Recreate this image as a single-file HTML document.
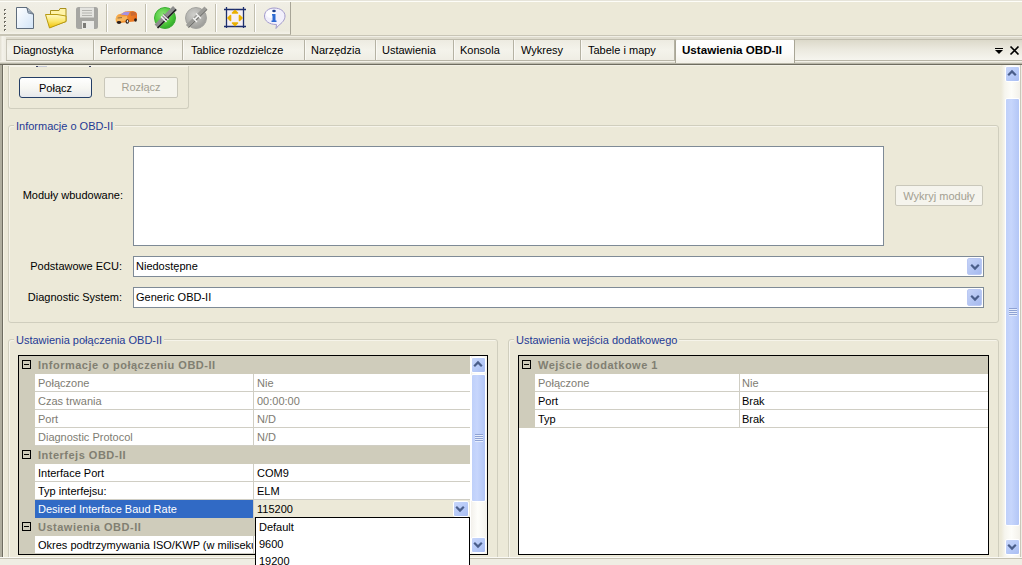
<!DOCTYPE html>
<html><head><meta charset="utf-8">
<style>
*{margin:0;padding:0;box-sizing:border-box}
html,body{width:1022px;height:565px;overflow:hidden;background:#ECE9D8;font-family:"Liberation Sans",sans-serif;font-size:11px;color:#000;position:relative}
.a{position:absolute}
.t{position:absolute;white-space:nowrap;line-height:13px}
/* toolbar */
#tb{left:0;top:0;width:1022px;height:35px;background:#EBE9DA;border-top:2px solid #fff}
#tbar{left:0;top:1px;width:291px;height:34px;background:linear-gradient(#F6F5EE,#EDEBE0 70%,#E2DFD0);border-right:1px solid #9D9C93;border-bottom:1px solid #C5C2B2}
.sep{position:absolute;top:4px;width:2px;height:28px;background:linear-gradient(90deg,#C2BFAF 0 1px,#FFFFFF 1px)}
/* tabs */
#tabs{left:0;top:35px;width:1022px;height:30px;background:#ECE9D8}
.tab{position:absolute;top:40px;height:20px;border-left:1px solid #FAF9F4;border-right:1px solid #B5B2A3}
.tab span{position:absolute;top:4px;white-space:nowrap;line-height:13px}
/* group boxes */
.gb{position:absolute;border:1px solid #D0CEBE;border-radius:3px;box-shadow:inset 1px 1px 0 #F6F4EA}
.gt{position:absolute;color:#1F3A94;background:#ECE9D8;padding:0 2px;white-space:nowrap;line-height:13px}
.btn{position:absolute;border:1px solid #243E66;border-radius:3px;background:linear-gradient(#FFFFFF,#F6F6F2 55%,#E6E8EC);text-align:center;line-height:19px;padding-top:1px}
.btnd{position:absolute;border:1px solid #C9C7BA;border-radius:2px;background:#F5F4ED;color:#A3A092;text-align:center;line-height:19px}
.tx{position:absolute;background:#fff;border:1px solid #7E8A96}
.combo{position:absolute;background:#fff;border:1px solid #7E8A96}
.combo span{position:absolute;left:2px;top:3px;white-space:nowrap}
.cbtn{position:absolute;right:1px;top:1px;width:15px;height:17px;border-radius:2px;background:linear-gradient(135deg,#C6D3F7,#B2C4F2 60%,#A6B9EE);border:1px solid #BAC8F3}
.lbl{position:absolute;white-space:nowrap;text-align:right}
/* property grid */
.pg{position:absolute;border:1px solid #000;background:#fff;overflow:hidden}
.row{position:absolute;left:0;height:18px}
.cat{background:#CFCCBB}
.cat b{position:absolute;left:19px;top:3px;color:#817F72;font-size:11px;letter-spacing:.5px;white-space:nowrap;line-height:13px}
.box{position:absolute;left:3px;top:4px;width:9px;height:9px;border:1px solid #000}
.box:after{content:"";position:absolute;left:1px;top:3px;width:5px;height:1px;background:#000}
.gut{position:absolute;left:0;top:0;width:16px;height:18px;background:#CFCCBB}
.c1{position:absolute;left:16px;top:0;height:18px;border-bottom:1px solid #D0CEC4;background:#fff}
.c1 span{position:absolute;left:3px;top:3px;white-space:nowrap;line-height:13px}
.c2 span{position:absolute;left:2px;top:3px;white-space:nowrap;line-height:13px}
.c2{position:absolute;top:0;height:18px;border-bottom:1px solid #D0CEC4;border-left:1px solid #D0CEC4;background:#fff}
.g{color:#7E7C72}
</style></head><body>

<!-- toolbar strip -->
<div class="a" style="left:0;top:0;width:1022px;height:36px;background:#ECE9D8;border-top:1px solid #E6E4DA"></div>
<div class="a" style="left:0;top:1px;width:1022px;height:1px;background:#FDFDF8"></div>
<div class="a" style="left:0;top:35px;width:1022px;height:1px;background:#C8C5B6"></div>
<div class="a" id="tbar" style="left:0;top:2px;width:291px;height:33px;background:linear-gradient(#F0EEE5,#EEECE0 50%,#ECEADD 90%,#F4F2EA);border-right:1px solid #A8A597;border-bottom:1px solid #C8C5B5"></div>
<div class="sep" style="left:106px"></div>
<div class="sep" style="left:145px"></div>
<div class="sep" style="left:215px"></div>
<div class="sep" style="left:254px"></div>

<!-- icons -->
<svg class="a" style="left:0;top:0" width="291" height="35" viewBox="0 0 291 35">
 <defs>
  <linearGradient id="doc" x1="0" y1="0" x2="1" y2="1"><stop offset="0" stop-color="#FFFFFF"/><stop offset="1" stop-color="#D2E4F7"/></linearGradient>
  <linearGradient id="fold" x1="0" y1="0" x2="0" y2="1"><stop offset="0" stop-color="#FFF9C8"/><stop offset=".5" stop-color="#FBE66A"/><stop offset="1" stop-color="#F0C000"/></linearGradient>
  <linearGradient id="car" x1="0" y1="0" x2="1" y2="0"><stop offset="0" stop-color="#F7B04E"/><stop offset=".5" stop-color="#F28A28"/><stop offset="1" stop-color="#E56A1E"/></linearGradient>
  <radialGradient id="grn" cx=".4" cy=".35" r=".7"><stop offset="0" stop-color="#8EE27A"/><stop offset=".6" stop-color="#4FCB3A"/><stop offset="1" stop-color="#2FA52A"/></radialGradient>
  <radialGradient id="gry" cx=".4" cy=".35" r=".7"><stop offset="0" stop-color="#D0D0CC"/><stop offset=".6" stop-color="#B0B0AC"/><stop offset="1" stop-color="#999995"/></radialGradient>
 </defs>
 <!-- grip -->
 <g fill="#6E6C62"><rect x="4" y="9" width="2" height="2"/><rect x="4" y="13" width="2" height="2"/><rect x="4" y="17" width="2" height="2"/><rect x="4" y="21" width="2" height="2"/><rect x="4" y="25" width="2" height="2"/><rect x="4" y="29" width="2" height="2"/></g>
 <g fill="#FFFFFF"><rect x="5" y="10" width="1" height="1"/><rect x="5" y="14" width="1" height="1"/><rect x="5" y="18" width="1" height="1"/><rect x="5" y="22" width="1" height="1"/><rect x="5" y="26" width="1" height="1"/><rect x="5" y="30" width="1" height="1"/></g>
 <!-- new -->
 <path d="M16.5 7.5 H27 L33.5 14 V28.5 H16.5 Z" fill="url(#doc)" stroke="#5E6C7C" stroke-width="1"/>
 <path d="M27 8 L28 11 L31 12.5 L33 14 L28 13 Z" fill="#B8C8DC" stroke="#5E6C7C" stroke-width=".8"/>
 <!-- open -->
 <path d="M50.5 27 V10.5 H59 L60 8.5 H66 V21.5 Z" fill="#FFF3A8" stroke="#A8901E" stroke-width="1"/>
 <path d="M45.5 14.5 H57 L66 16 V21.5 L49.5 28 Z" fill="url(#fold)" stroke="#B89A10" stroke-width="1"/>
 <!-- save -->
 <rect x="76" y="7" width="22" height="22" rx="2.5" fill="#A6A6A2"/>
 <rect x="80" y="7.5" width="14" height="10" fill="#E4E4E0"/>
 <path d="M82 10.5 H92 M82 13 H92 M82 15.5 H92" stroke="#B4B4B0" stroke-width="1"/>
 <rect x="82" y="21" width="12" height="8" fill="#EAEAE6"/>
 <rect x="83" y="23" width="3" height="5" fill="#7C7C78"/>
 <!-- car -->
 <path d="M115.5 19 Q116 15.5 118 14.5 L122 13.5 L125 11.5 L133 11 Q136.5 11.5 137 14 L137 19.5 L134 21.5 L120 23 L116 22 Z" fill="url(#car)"/>
 <path d="M120.5 14.5 L124.5 12 L130 11.8 L128 15.5 Z" fill="#A491E2"/>
 <path d="M130.5 12 L135.5 12 L136 15 L131 16 Z" fill="#C96A34"/>
 <path d="M116.5 17 L127 16 L127.5 20.5 L117 21.5 Z" fill="#F9BE68" opacity=".8"/>
 <path d="M117.5 18 L122 17.6" stroke="#8A6A40" stroke-width="1"/>
 <ellipse cx="119" cy="22.5" rx="2.2" ry="1.4" fill="#2A1E1A"/>
 <ellipse cx="127.3" cy="21.5" rx="1.7" ry="2.3" fill="#2A1E1A"/>
 <ellipse cx="127.5" cy="21.3" rx=".7" ry="1.2" fill="#F0F0F0"/>
 <ellipse cx="135.5" cy="20" rx="1.4" ry="1.8" fill="#2A1E1A"/>
 <!-- connect (green) -->
 <circle cx="165" cy="18" r="10.5" fill="url(#grn)" stroke="#3BAF33" stroke-width="1"/>
 <path d="M156.5 26.5 L175 8" stroke="#8E8E8E" stroke-width="5.5"/>
 <path d="M157.5 28 L176 9.5" stroke="#1A1A1A" stroke-width="1.4"/>
 <path d="M163 14.5 L168.5 20 M161 16.5 L166.5 22" stroke="#F4ECF4" stroke-width="1.6"/>
 <path d="M163.3 13.8 L169 19.2" stroke="#4A3A4A" stroke-width=".8"/>
 <!-- disconnect (gray) -->
 <circle cx="196" cy="18" r="10.5" fill="url(#gry)" stroke="#A4A4A0" stroke-width="1"/>
 <path d="M187.5 26.5 L206 8" stroke="#9C9C98" stroke-width="4.5"/>
 <path d="M188.5 27.5 L207 9.5" stroke="#6E6E6A" stroke-width="1"/>
 <path d="M193 18 L197 22 M196 13.5 L201 18.5 M194.5 19.5 L198 16" stroke="#F4F4F2" stroke-width="1.4"/>
 <!-- fit -->
 <rect x="227" y="10" width="16" height="16" fill="#F6F0F4"/>
 <path d="M226.5 7 V28 M243.5 7 V28 M224 9.5 H246 M224 26.5 H246" stroke="#1C2E6E" stroke-width="1.3"/>
 <path d="M232.5 13 L237.5 13 L235 10.5 Z M232.5 23 L237.5 23 L235 25.5 Z M230.5 15.5 L230.5 20.5 L228 18 Z M239.5 15.5 L239.5 20.5 L242 18 Z" fill="#E9B000" stroke="#E9B000" stroke-width="1.6" stroke-linejoin="round"/>
 <!-- info -->
 <path d="M274 8 C280.5 8 285 11.5 285 16 C285 20 282 23 278.5 25.5 L276 28.5 L276.5 24.5 C269 24.5 264.5 21 264.5 16 C264.5 11.5 268.5 8 274 8 Z" fill="#F2F0FC" stroke="#A29ACC" stroke-width="1"/>
 <ellipse cx="271" cy="14" rx="5" ry="4" fill="#FFFFFF" opacity=".8"/>
 <ellipse cx="274" cy="11" rx="1.8" ry="1.2" fill="#1E3F8E"/>
 <path d="M272 14 H275.5 V20.5 H276.5 V22 H271.5 V20.5 H272.5 V15.5 H272 Z" fill="#2F6AD2"/>
</svg>

<!-- tab strip -->
<div class="a" style="left:0;top:36px;width:1022px;height:3px;background:linear-gradient(#F0EEE5 0 1px,#DEDBCD 1px)"></div>
<div class="a" style="left:6px;top:39px;width:1016px;height:22px;background:linear-gradient(#EDEBE1,#F4F3EB 50%,#EFEDE4);border-top:1px solid #BFBCAD;border-bottom:1px solid #B9B6A8"></div>
<div class="a" style="left:0;top:36px;width:6px;height:25px;background:linear-gradient(90deg,#E2DFD2,#F4F2EA 40%,#EDEBE1)"></div>
<div class="a" style="left:0;top:61px;width:1022px;height:2px;background:#F3F1E8"></div>
<div class="a" style="left:0;top:62px;width:1022px;height:4px;background:linear-gradient(#DAD8CB 0 1px,#B9B7A9 1px 2px,#6F6D60 2px 3px,#F3F1E6 3px)"></div>

<div class="tab" style="left:6px;width:88px;border-left-color:#C8C5B8"><span style="left:6px">Diagnostyka</span></div>
<div class="tab" style="left:94px;width:89px"><span style="left:5px">Performance</span></div>
<div class="tab" style="left:183px;width:122px"><span style="left:7px">Tablice rozdzielcze</span></div>
<div class="tab" style="left:305px;width:71px"><span style="left:5px">Narzędzia</span></div>
<div class="tab" style="left:376px;width:78px"><span style="left:5px">Ustawienia</span></div>
<div class="tab" style="left:454px;width:60px"><span style="left:5px">Konsola</span></div>
<div class="tab" style="left:514px;width:67px"><span style="left:6px">Wykresy</span></div>
<div class="tab" style="left:581px;width:94px"><span style="left:6px">Tabele i mapy</span></div>
<div class="tab" style="left:794px;width:228px;border-right:none;border-left-color:#B5B2A3;background:linear-gradient(#DCD9CA,#ECEAE0 50%,#F6F5EF)"></div>
<div class="a" style="left:675px;top:39px;width:120px;height:24px;background:linear-gradient(#FFFFFF,#FCFBF8 60%,#F3F1E8);border-left:1px solid #A9A696;border-right:1px solid #A9A696;border-top:1px solid #CFCCBD;border-radius:2px 2px 0 0"><span class="t" style="left:6px;top:3px;font-weight:bold;font-size:11.6px">Ustawienia OBD-II</span></div>
<!-- dropdown & close -->
<div class="a" style="left:995px;top:48px;width:8px;height:1px;background:#000"></div>
<div class="a" style="left:995px;top:50px;width:0;height:0;border-left:4px solid transparent;border-right:4px solid transparent;border-top:4px solid #000"></div>
<svg class="a" style="left:1009px;top:45px" width="11" height="11" viewBox="0 0 11 11"><path d="M1.5 1.5 L9.5 9.5 M9.5 1.5 L1.5 9.5" stroke="#000" stroke-width="1.7"/></svg>

<!-- content panel -->
<div class="a" style="left:0;top:65px;width:4px;height:492px;background:linear-gradient(90deg,#B0AE9F 0 2px,#6E6C60 2px 3px,#F6F4E6 3px 4px)"></div>
<div class="a" style="left:1020px;top:65px;width:2px;height:492px;background:linear-gradient(90deg,#C9C7BA 0 1px,#EFEDE5 1px)"></div>

<!-- scrollbar -->
<div class="a" style="left:1001px;top:65px;width:19px;height:492px;background:linear-gradient(90deg,#ECE9D8,#F6F5EE 20%,#FDFDF9 55%,#F3F1EA)"></div>
<div class="a" style="left:1005px;top:66px;width:15px;height:16px;border:1px solid #fff;border-radius:2px;background:linear-gradient(135deg,#C8D6FA,#B8CBF8 50%,#A9BDF2)"></div>
<svg class="a" style="left:1007px;top:69px" width="10" height="8" viewBox="0 0 10 8"><path d="M1.2 6.2 L5 2.4 L8.8 6.2" fill="none" stroke="#4A5E8A" stroke-width="2.2"/></svg>
<div class="a" style="left:1005px;top:98px;width:15px;height:428px;border:1px solid #fff;border-radius:2px;background:linear-gradient(90deg,#BFD0FA,#C7D6FC 40%,#B3C6F6)"></div>
<div class="a" style="left:1009px;top:308px;width:8px;height:8px;background:repeating-linear-gradient(#8EA2D4 0 1px,#E6EDFC 1px 2px)"></div>
<div class="a" style="left:1005px;top:539px;width:15px;height:16px;border:1px solid #fff;border-radius:2px;background:linear-gradient(135deg,#C8D6FA,#B8CBF8 50%,#A9BDF2)"></div>
<svg class="a" style="left:1007px;top:543px" width="10" height="8" viewBox="0 0 10 8"><path d="M1.2 1.8 L5 5.6 L8.8 1.8" fill="none" stroke="#4A5E8A" stroke-width="2.2"/></svg>

<!-- group box 1 (scrolled) -->
<div class="gb" style="left:8px;top:66px;width:181px;height:43px;border-top:none;border-top-left-radius:0;border-top-right-radius:0"></div>
<div class="a" style="left:36px;top:66px;width:2px;height:1px;background:#3A4060"></div>
<div class="a" style="left:38px;top:66px;width:9px;height:1px;background:#C8CCDA"></div>
<div class="a" style="left:89px;top:66px;width:2px;height:1px;background:#3A4060"></div>
<div class="btn" style="left:19px;top:77px;width:73px;height:21px">Połącz</div>
<div class="btnd" style="left:104px;top:77px;width:74px;height:21px">Rozłącz</div>

<!-- group box 2 -->
<div class="gb" style="left:8px;top:125px;width:991px;height:198px"></div>
<div class="gt" style="left:14px;top:120px">Informacje o OBD-II</div>
<div class="lbl" style="right:899px;top:189px">Moduły wbudowane:</div>
<div class="tx" style="left:133px;top:146px;width:751px;height:100px"></div>
<div class="btnd" style="left:895px;top:185px;width:88px;height:21px;padding-top:1px;line-height:18px">Wykryj moduły</div>
<div class="lbl" style="right:900px;top:260px">Podstawowe ECU:</div>
<div class="combo" style="left:133px;top:256px;width:851px;height:21px"><span>Niedostępne</span><div class="cbtn"><svg style="position:absolute;left:2px;top:4px" width="10" height="8" viewBox="0 0 10 8"><path d="M1.2 1.8 L5 5.6 L8.8 1.8" fill="none" stroke="#4A5E8A" stroke-width="2.2"/></svg></div></div>
<div class="lbl" style="right:900px;top:291px">Diagnostic System:</div>
<div class="combo" style="left:133px;top:287px;width:851px;height:21px"><span>Generic OBD-II</span><div class="cbtn"><svg style="position:absolute;left:2px;top:4px" width="10" height="8" viewBox="0 0 10 8"><path d="M1.2 1.8 L5 5.6 L8.8 1.8" fill="none" stroke="#4A5E8A" stroke-width="2.2"/></svg></div></div>

<!-- group box 3 -->
<div class="gb" style="left:8px;top:339px;width:490px;height:231px"></div>
<div class="gt" style="left:14px;top:334px">Ustawienia połączenia OBD-II</div>
<div class="pg" style="left:18px;top:355px;width:470px;height:200px">
<div class="row cat" style="top:0px;width:451px"><div class="box"></div><b>Informacje o połączeniu OBD-II</b></div>
<div class="row" style="top:18px;width:451px"><div class="gut"></div><div class="c1 g" style="width:218px"><span style="left:3px">Połączone</span></div><div class="c2 g" style="left:234px;width:217px"><span style="left:3px">Nie</span></div></div>
<div class="row" style="top:36px;width:451px"><div class="gut"></div><div class="c1 g" style="width:218px"><span style="left:3px">Czas trwania</span></div><div class="c2 g" style="left:234px;width:217px"><span style="left:3px">00:00:00</span></div></div>
<div class="row" style="top:54px;width:451px"><div class="gut"></div><div class="c1 g" style="width:218px"><span style="left:3px">Port</span></div><div class="c2 g" style="left:234px;width:217px"><span style="left:3px">N/D</span></div></div>
<div class="row" style="top:72px;width:451px"><div class="gut"></div><div class="c1 g" style="width:218px"><span style="left:3px">Diagnostic Protocol</span></div><div class="c2 g" style="left:234px;width:217px"><span style="left:3px">N/D</span></div></div>
<div class="row cat" style="top:90px;width:451px"><div class="box"></div><b>Interfejs OBD-II</b></div>
<div class="row" style="top:108px;width:451px"><div class="gut"></div><div class="c1 " style="width:218px"><span style="left:3px">Interface Port</span></div><div class="c2 " style="left:234px;width:217px"><span style="left:3px">COM9</span></div></div>
<div class="row" style="top:126px;width:451px"><div class="gut"></div><div class="c1 " style="width:218px"><span style="left:3px">Typ interfejsu:</span></div><div class="c2 " style="left:234px;width:217px"><span style="left:3px">ELM</span></div></div>
<div class="row" style="top:144px;width:451px"><div class="gut"></div><div class="c1" style="width:218px;background:#316AC5;color:#fff;border-bottom-color:#316AC5"><span style="left:3px">Desired Interface Baud Rate</span></div><div class="c2" style="left:234px;width:217px;background:#ECE9D8"><span style="left:3px">115200</span></div></div>
<div class="row cat" style="top:162px;width:451px"><div class="box"></div><b>Ustawienia OBD-II</b></div>
<div class="row" style="top:180px;width:451px"><div class="gut"></div><div class="c1 " style="width:218px"><span style="left:3px">Okres podtrzymywania ISO/KWP (w milisekundach)</span></div><div class="c2 " style="left:234px;width:217px"><span style="left:3px"></span></div></div>
<div class="a" style="left:452px;top:0;width:17px;height:198px;background:linear-gradient(90deg,#F3F1EC,#FEFEFB 40%,#F3F1EA)"></div>
<div class="a" style="left:452px;top:1px;width:15px;height:16px;border:1px solid #fff;border-radius:2px;background:linear-gradient(135deg,#C8D6FA,#B8CBF8 50%,#A9BDF2)"></div>
<svg class="a" style="left:454px;top:4px" width="10" height="8" viewBox="0 0 10 8"><path d="M1.2 6.2 L5 2.4 L8.8 6.2" fill="none" stroke="#4A5E8A" stroke-width="2.2"/></svg>
<div class="a" style="left:452px;top:18px;width:15px;height:128px;border:1px solid #fff;border-radius:2px;background:linear-gradient(90deg,#BFD0FA,#C7D6FC 40%,#B3C6F6)"></div>
<div class="a" style="left:456px;top:78px;width:8px;height:8px;background:repeating-linear-gradient(#8EA2D4 0 1px,#E6EDFC 1px 2px)"></div>
<div class="a" style="left:452px;top:181px;width:15px;height:16px;border:1px solid #fff;border-radius:2px;background:linear-gradient(135deg,#C8D6FA,#B8CBF8 50%,#A9BDF2)"></div>
<svg class="a" style="left:454px;top:185px" width="10" height="8" viewBox="0 0 10 8"><path d="M1.2 1.8 L5 5.6 L8.8 1.8" fill="none" stroke="#4A5E8A" stroke-width="2.2"/></svg>
<div class="a" style="left:434px;top:145px;width:16px;height:16px;border:1px solid #fff;border-radius:2px;background:linear-gradient(135deg,#C8D6FA,#B8CBF8 50%,#A9BDF2)"></div>
<svg class="a" style="left:436px;top:149px" width="10" height="8" viewBox="0 0 10 8"><path d="M1.2 1.8 L5 5.6 L8.8 1.8" fill="none" stroke="#4A5E8A" stroke-width="2.2"/></svg>

</div>

<!-- group box 4 -->
<div class="gb" style="left:508px;top:339px;width:491px;height:231px"></div>
<div class="gt" style="left:514px;top:334px">Ustawienia wejścia dodatkowego</div>
<div class="pg" style="left:518px;top:355px;width:471px;height:200px">
<div class="row cat" style="top:0px;width:469px"><div class="box"></div><b>Wejście dodatkowe 1</b></div>
<div class="row" style="top:18px;width:469px"><div class="gut"></div><div class="c1 g" style="width:204px"><span>Połączone</span></div><div class="c2 g" style="left:220px;width:249px"><span>Nie</span></div></div>
<div class="row" style="top:36px;width:469px"><div class="gut"></div><div class="c1 " style="width:204px"><span>Port</span></div><div class="c2 " style="left:220px;width:249px"><span>Brak</span></div></div>
<div class="row" style="top:54px;width:469px"><div class="gut"></div><div class="c1 " style="width:204px"><span>Typ</span></div><div class="c2 " style="left:220px;width:249px"><span>Brak</span></div></div>
</div>


<div class="a" style="left:0;top:557px;width:1022px;height:1px;background:#FAF9F4;z-index:5"></div>
<div class="a" style="left:0;top:558px;width:1022px;height:1px;background:#C4C1B2;z-index:5"></div>
<div class="a" style="left:0;top:559px;width:1022px;height:6px;background:#EFEDE3;z-index:5"></div>
<!-- dropdown list -->
<div class="a" style="left:255px;top:517px;width:215px;height:60px;background:#fff;border:1px solid #000;z-index:6">
 <span class="t" style="left:3px;top:3px">Default</span>
 <span class="t" style="left:3px;top:20px">9600</span>
 <span class="t" style="left:3px;top:37px">19200</span>
</div>
</body></html>
